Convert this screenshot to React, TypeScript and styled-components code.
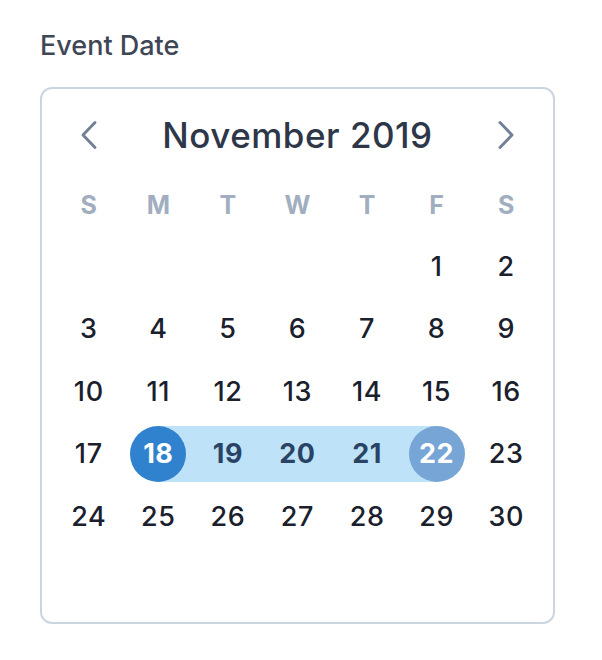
import React from 'react'
import styled, { createGlobalStyle, css } from 'styled-components'

const GlobalStyle = createGlobalStyle`
  body {
    margin: 0;
    background: #fff;
    font-family: Inter, "Noto Sans", sans-serif;
  }
`

type RangePos = 'start' | 'middle' | 'end' | undefined

const WEEKDAYS = ['S', 'M', 'T', 'W', 'T', 'F', 'S']
const FIRST_WEEKDAY = 5
const DAYS_IN_MONTH = 30
const RANGE_START = 18
const RANGE_END = 22

const App: React.FC = () => {
  const cells: (number | null)[] = []
  for (let i = 0; i < FIRST_WEEKDAY; i++) cells.push(null)
  for (let d = 1; d <= DAYS_IN_MONTH; d++) cells.push(d)
  while (cells.length < 42) cells.push(null)

  const rangeOf = (day: number | null): RangePos => {
    if (day === null) return undefined
    if (day === RANGE_START) return 'start'
    if (day === RANGE_END) return 'end'
    if (day > RANGE_START && day < RANGE_END) return 'middle'
    return undefined
  }

  return (
    <>
      <GlobalStyle />
      <Page>
        <Label>Event Date</Label>
        <Card>
          <Header>
            <NavButton aria-label="Previous month">
              <Chevron dir="left" />
            </NavButton>
            <MonthTitle>November 2019</MonthTitle>
            <NavButton aria-label="Next month">
              <Chevron dir="right" />
            </NavButton>
          </Header>

          <WeekdayRow>
            {WEEKDAYS.map((w, i) => (
              <Weekday key={i}>{w}</Weekday>
            ))}
          </WeekdayRow>

          <DayGrid>
            {cells.map((day, i) => {
              const range = rangeOf(day)
              return (
                <DayCell key={i}>
                  <Band range={range}>
                    {day !== null && <Day range={range}>{day}</Day>}
                  </Band>
                </DayCell>
              )
            })}
          </DayGrid>
        </Card>
      </Page>
    </>
  )
}

export default App

const Chevron: React.FC<{ dir: 'left' | 'right' }> = ({ dir }) => (
  <svg width="18" height="30" viewBox="0 0 18 30" fill="none">
    <polyline
      points={dir === 'left' ? '15,2.5 3,15 15,27.5' : '3,2.5 15,15 3,27.5'}
      stroke="#718096"
      strokeWidth="2.9"
      strokeLinecap="round"
      strokeLinejoin="round"
    />
  </svg>
)

const Page = styled.div`
  padding: 30px 0 0 40px;
`

const Label = styled.div`
  font-size: 27px;
  font-weight: 500;
  color: #3f4756;
  line-height: 31px;
`

const Card = styled.div`
  margin-top: 26px;
  width: 515px;
  box-sizing: border-box;
  border: 2px solid #cbd5e0;
  border-radius: 12px;
  padding: 12px;
`

const Header = styled.div`
  height: 68px;
  display: flex;
  align-items: center;
  justify-content: space-between;
`

const NavButton = styled.button`
  width: 69.6px;
  height: 48px;
  border: none;
  background: none;
  padding: 0;
  display: flex;
  align-items: center;
  justify-content: center;
  cursor: pointer;
`

const MonthTitle = styled.div`
  font-size: 35px;
  font-weight: 500;
  color: #2d3748;
  letter-spacing: 0.5px;
`

const WeekdayRow = styled.div`
  height: 66px;
  box-sizing: border-box;
  padding-top: 6px;
  display: grid;
  grid-template-columns: repeat(7, 1fr);
  align-items: center;
`

const Weekday = styled.div`
  text-align: center;
  font-size: 25px;
  font-weight: 700;
  color: #a0aec0;
`

const DayGrid = styled.div`
  display: grid;
  grid-template-columns: repeat(7, 1fr);
  grid-auto-rows: 62.5px;
`

const DayCell = styled.div`
  display: flex;
  align-items: center;
`

const Band = styled.div<{ range: RangePos }>`
  width: 100%;
  height: 56px;
  display: flex;
  align-items: center;
  justify-content: center;
  ${({ range }) =>
    range === 'start'
      ? css`background: linear-gradient(to right, transparent 50%, #bee3f8 50%);`
      : range === 'end'
      ? css`background: linear-gradient(to right, #bee3f8 50%, transparent 50%);`
      : range === 'middle'
      ? css`background: #bee3f8;`
      : ''}
`

const Day = styled.div<{ range: RangePos }>`
  width: 56px;
  height: 56px;
  border-radius: 50%;
  display: flex;
  align-items: center;
  justify-content: center;
  font-size: 27px;
  font-weight: 500;
  letter-spacing: 0.6px;
  color: #1a202c;
  ${({ range }) =>
    range === 'start' &&
    css`
      background: #3182ce;
      color: #fff;
      font-weight: 700;
    `}
  ${({ range }) =>
    range === 'end' &&
    css`
      background: #76a5d6;
      color: #fff;
      font-weight: 700;
    `}
  ${({ range }) =>
    range === 'middle' &&
    css`
      color: #2a4365;
      font-weight: 700;
    `}
`
